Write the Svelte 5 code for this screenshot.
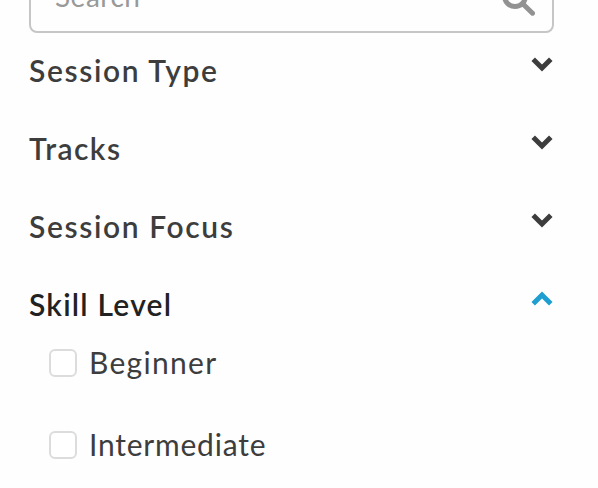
<script lang="ts">
	let query = $state('');

	let sections = $state([
		{ title: 'Session Type', slug: 'type', open: false, options: [] as string[] },
		{ title: 'Tracks', slug: 'tracks', open: false, options: [] as string[] },
		{ title: 'Session Focus', slug: 'focus', open: false, options: [] as string[] },
		{ title: 'Skill Level', slug: 'level', open: true, options: ['Beginner', 'Intermediate'] }
	]);
</script>

<aside class="filters">
	<div class="search">
		<input type="text" placeholder="Search" aria-label="Search" bind:value={query} />
		<svg class="search-icon" width="34" height="34" viewBox="0 0 34 34" aria-hidden="true">
			<circle cx="14" cy="14" r="10.5" />
			<path d="M21.5 21.5 L31.5 31.2" />
		</svg>
	</div>

	{#each sections as section}
		<section>
			<button
				class="heading {section.slug}"
				class:open={section.open}
				aria-expanded={section.open}
				onclick={() => (section.open = !section.open)}
			>
				<span>{section.title}</span>
				<svg class="chevron" width="22" height="16" viewBox="0 0 22 16" aria-hidden="true">
					<path d="M2.2 3.3 L11 12 L19.8 3.3" />
				</svg>
			</button>
			{#if section.open}
				<div class="options">
					{#each section.options as option}
						<label class={option.toLowerCase()}>
							<input type="checkbox" />
							<span>{option}</span>
						</label>
					{/each}
				</div>
			{/if}
		</section>
	{/each}
</aside>

<style>
	:global(body) {
		background: #fefefe;
		overflow: hidden;
	}

	.filters {
		display: flex;
		flex-direction: column;
		box-sizing: border-box;
		width: 598px;
		height: 488px;
		padding: 0 44px 0 29px;
		overflow: hidden;
		font-family: Lato, 'Open Sans', sans-serif;
		font-size: 30px;
		color: #3d3d3e;
	}

	.search {
		display: flex;
		align-items: center;
		flex-shrink: 0;
		box-sizing: border-box;
		height: 73px;
		margin: -40px 0 18px;
		padding: 0 17px 0 24px;
		border: 2px solid #c6c6c6;
		border-radius: 8px;
	}

	.search input {
		flex: 1;
		min-width: 0;
		padding: 0 0 2px;
		border: 0;
		outline: 0;
		background: none;
		font: inherit;
		font-size: 28px;
		letter-spacing: 0.5px;
	}

	.search input::placeholder {
		color: #999;
		opacity: 1;
	}

	.search-icon {
		margin-top: 5px;
		fill: none;
		stroke: #929292;
		stroke-width: 5;
	}

	.search-icon path {
		stroke-linecap: round;
	}

	section {
		flex-shrink: 0;
		margin-bottom: 38px;
	}

	.heading {
		display: flex;
		align-items: center;
		justify-content: space-between;
		width: 100%;
		height: 40px;
		padding: 0 1px 2px 0;
		border: 0;
		background: none;
		font: inherit;
		font-weight: 600;
		letter-spacing: 1.62px;
		color: inherit;
		cursor: pointer;
	}

	.heading.tracks {
		letter-spacing: 1.45px;
	}

	.heading.level {
		letter-spacing: 1.22px;
	}

	.heading.open {
		color: #222223;
	}

	.chevron {
		margin-bottom: 13px;
		fill: none;
		stroke: #3d3d3e;
		stroke-width: 5;
	}

	.open .chevron {
		margin-bottom: 11px;
		stroke: #1f9ed1;
		transform: rotate(180deg);
	}

	.options {
		display: flex;
		flex-direction: column;
		gap: 42px;
		padding: 18px 0 0 20px;
	}

	label {
		display: flex;
		align-items: center;
		gap: 12px;
		height: 40px;
	}

	label span {
		padding-bottom: 2px;
		letter-spacing: 1.3px;
	}

	label.intermediate span {
		letter-spacing: 0.78px;
	}

	label input {
		appearance: none;
		box-sizing: border-box;
		width: 28px;
		height: 28px;
		margin: 0;
		border: 2px solid #dcdcdc;
		border-radius: 6px;
		background: #fff;
	}
</style>
